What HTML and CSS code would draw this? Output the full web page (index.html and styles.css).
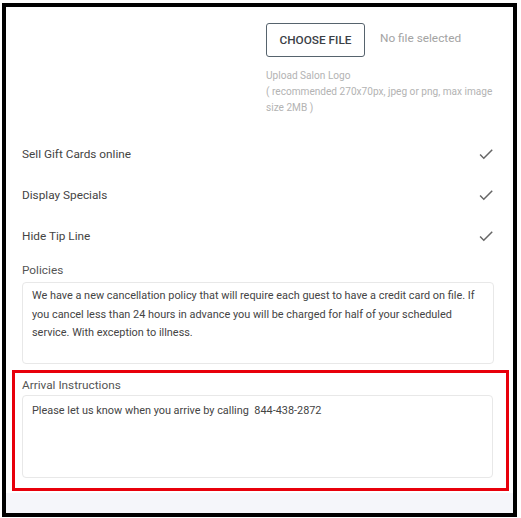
FILE: index.html
```html
<!DOCTYPE html>
<html lang="en">
<head>
  <meta charset="UTF-8" />
  <meta name="viewport" content="width=device-width, initial-scale=1.0"/>
  <title>Salon Settings</title>
  <link rel="stylesheet" href="styles.css">
</head>
<body>
  <div class="frame">
    <div class="settings">
      <div class="upload">
        <div class="upload-row">
          <button class="file-btn">CHOOSE FILE</button>
          <span class="file-name">No file selected</span>
        </div>
        <div class="hint">
          Upload Salon Logo<br>
          ( recommended 270x70px, jpeg or png, max image size 2MB )
        </div>
      </div>

      <div class="toggles">
        <div class="toggle">
          <span>Sell Gift Cards online</span>
          <svg class="check" viewBox="0 0 24 24"><path d="M9 16.2 4.8 12l-1.4 1.4L9 19 21 7l-1.4-1.4z"/></svg>
        </div>
        <div class="toggle">
          <span>Display Specials</span>
          <svg class="check" viewBox="0 0 24 24"><path d="M9 16.2 4.8 12l-1.4 1.4L9 19 21 7l-1.4-1.4z"/></svg>
        </div>
        <div class="toggle">
          <span>Hide Tip Line</span>
          <svg class="check" viewBox="0 0 24 24"><path d="M9 16.2 4.8 12l-1.4 1.4L9 19 21 7l-1.4-1.4z"/></svg>
        </div>
      </div>

      <div class="field">
        <label class="field-label">Policies</label>
        <div class="text-box policies">We have a new cancellation policy that will require each guest to have a credit card on file. If you cancel less than 24 hours in advance you will be charged for half of your scheduled service. With exception to illness.</div>
      </div>

      <div class="field marked">
        <label class="field-label">Arrival Instructions</label>
        <div class="text-box arrival">Please let us know when you arrive by calling&nbsp; 844-438-2872</div>
      </div>
    </div>
  </div>
</body>
</html>
```

FILE: styles.css
```css
body {
  margin: 0;
  font-family: Roboto, 'Liberation Sans', sans-serif;
  background: #fff;
}
.frame {
  margin: 3px 4px 0 2px;
  height: 506px;
  border: 4px solid #000;
  background: #f5f6fa;
  overflow: hidden;
}
.settings {
  background: #fff;
  padding: 16px 19px 2px 16px;
  height: 468px;
}
.upload {
  margin-left: 244px;
}
.upload-row {
  display: flex;
  align-items: flex-start;
  gap: 15px;
}
.file-btn {
  width: 99px;
  height: 34px;
  background: #fff;
  border: 1px solid #56636d;
  border-radius: 3px;
  font-family: inherit;
  font-size: 11.8px;
  font-weight: 500;
  color: #3b4046;
  padding: 0;
}
.file-name {
  font-size: 11.8px;
  color: #a3a3a3;
  line-height: 16px;
  margin-top: 7px;
}
.hint {
  margin-top: 11px;
  font-size: 10.1px;
  line-height: 16px;
  color: #b3b3b3;
}
.toggles {
  margin-top: 17px;
}
.toggle {
  display: flex;
  justify-content: space-between;
  align-items: center;
  height: 41px;
  font-size: 11.8px;
  color: #444;
}
.check {
  width: 18px;
  height: 18px;
  margin-right: -1px;
  fill: #666;
}
.field {
  margin-top: 6px;
}
.field-label {
  display: block;
  font-size: 11.8px;
  line-height: 16px;
  color: #555;
}
.text-box {
  margin-top: 4px;
  border: 1px solid #e8e8e8;
  border-radius: 4px;
  padding: 4px 9px;
  font-size: 10.9px;
  line-height: 18.5px;
  color: #444;
  box-sizing: border-box;
}
.policies {
  height: 82px;
}
.marked {
  margin: 6px -15px 0 -10px;
  border: 3px solid #e8000b;
  padding: 4px 13px 10px 7px;
}
.marked .text-box {
  margin-top: 2px;
  height: 83px;
  padding-top: 6px;
}
```
